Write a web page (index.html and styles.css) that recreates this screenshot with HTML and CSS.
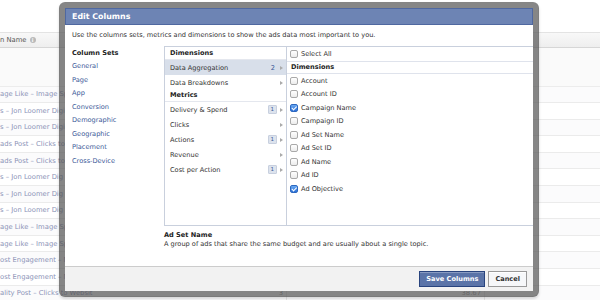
FILE: index.html
```html
<!DOCTYPE html>
<html lang="en">
<head>
    <meta charset="UTF-8">
    <title>Edit Columns</title>
    <link rel="stylesheet" href="styles.css">
</head>
<body>
    <div class="grid">
        <div class="grid-head">
            <span class="head-name">n Name <i class="info">i</i></span>
        </div>
        <div class="grid-summary"></div>
        <div class="grid-row"><span class="cell-name">age Like – Image Sp</span><span class="cell-num"></span><span class="cell-num"></span></div>
        <div class="grid-row"><span class="cell-name">s – Jon Loomer Digi</span><span class="cell-num"></span><span class="cell-num"></span></div>
        <div class="grid-row"><span class="cell-name">s – Jon Loomer Digi</span><span class="cell-num"></span><span class="cell-num"></span></div>
        <div class="grid-row"><span class="cell-name">ads Post – Clicks to</span><span class="cell-num"></span><span class="cell-num"></span></div>
        <div class="grid-row"><span class="cell-name">ads Post – Clicks to</span><span class="cell-num"></span><span class="cell-num"></span></div>
        <div class="grid-row"><span class="cell-name">s – Jon Loomer Dig</span><span class="cell-num"></span><span class="cell-num"></span></div>
        <div class="grid-row"><span class="cell-name">s – Jon Loomer Dig</span><span class="cell-num"></span><span class="cell-num"></span></div>
        <div class="grid-row"><span class="cell-name">s – Jon Loomer Dig</span><span class="cell-num"></span><span class="cell-num"></span></div>
        <div class="grid-row"><span class="cell-name">age Like – Image Sp</span><span class="cell-num"></span><span class="cell-num"></span></div>
        <div class="grid-row"><span class="cell-name">age Like – Image Sp</span><span class="cell-num"></span><span class="cell-num"></span></div>
        <div class="grid-row"><span class="cell-name">ost Engagement – N</span><span class="cell-num"></span><span class="cell-num"></span></div>
        <div class="grid-row"><span class="cell-name">ost Engagement – N</span><span class="cell-num"></span><span class="cell-num"></span></div>
        <div class="grid-row last"><span class="cell-name">ality Post – Clicks to Websit</span><span class="cell-num">3</span><span class="cell-num">38.67</span></div>
    </div>

    <div class="dialog">
        <div class="dialog-title">Edit Columns</div>
        <div class="dialog-body">
            <p class="intro">Use the columns sets, metrics and dimensions to show the ads data most important to you.</p>
            <div class="editor">
                <div class="sets">
                    <h4>Column Sets</h4>
                    <a href="#">General</a>
                    <a href="#">Page</a>
                    <a href="#">App</a>
                    <a href="#">Conversion</a>
                    <a href="#">Demographic</a>
                    <a href="#">Geographic</a>
                    <a href="#">Placement</a>
                    <a href="#">Cross-Device</a>
                </div>
                <div class="main">
                    <div class="picker">
                        <div class="groups">
                            <div class="group-head first">Dimensions</div>
                            <div class="group selected"><span class="label">Data Aggregation</span><span class="count">2</span><span class="arrow"></span></div>
                            <div class="group"><span class="label">Data Breakdowns</span><span class="arrow"></span></div>
                            <div class="group-head">Metrics</div>
                            <div class="group"><span class="label">Delivery &amp; Spend</span><span class="badge">1</span><span class="arrow"></span></div>
                            <div class="group"><span class="label">Clicks</span><span class="arrow"></span></div>
                            <div class="group"><span class="label">Actions</span><span class="badge">1</span><span class="arrow"></span></div>
                            <div class="group"><span class="label">Revenue</span><span class="arrow"></span></div>
                            <div class="group"><span class="label">Cost per Action</span><span class="badge">1</span><span class="arrow"></span></div>
                        </div>
                        <div class="fields">
                            <div class="field select-all"><span class="check"></span>Select All</div>
                            <div class="field-head">Dimensions</div>
                            <div class="field"><span class="check"></span>Account</div>
                            <div class="field"><span class="check"></span>Account ID</div>
                            <div class="field"><span class="check on"></span>Campaign Name</div>
                            <div class="field"><span class="check"></span>Campaign ID</div>
                            <div class="field"><span class="check"></span>Ad Set Name</div>
                            <div class="field"><span class="check"></span>Ad Set ID</div>
                            <div class="field"><span class="check"></span>Ad Name</div>
                            <div class="field"><span class="check"></span>Ad ID</div>
                            <div class="field"><span class="check on"></span>Ad Objective</div>
                        </div>
                    </div>
                    <div class="help">
                        <strong>Ad Set Name</strong>
                        <p>A group of ads that share the same budget and are usually about a single topic.</p>
                    </div>
                </div>
            </div>
        </div>
        <div class="dialog-footer">
            <button class="btn primary">Save Columns</button>
            <button class="btn">Cancel</button>
        </div>
    </div>
</body>
</html>
```

FILE: styles.css
```css
body {
    margin: 0;
    width: 600px;
    height: 300px;
    overflow: hidden;
    position: relative;
    font-family: "DejaVu Sans", "Liberation Sans", sans-serif;
    font-size: 6.6px;
    color: #333;
    background: #fff;
}

/* page behind the dialog */
.grid {
    padding-top: 32px;
}
.grid-head {
    height: 16px;
    box-sizing: border-box;
    border-top: 1px solid #e3e3e3;
    border-bottom: 1px solid #d6d6d6;
    background: linear-gradient(#f8f8f8, #eeeeee);
    display: flex;
    align-items: center;
    color: #555;
    white-space: nowrap;
    font-size: 6.8px;
}
.head-name {
    display: flex;
    align-items: center;
}
.info {
    display: inline-block;
    width: 6px;
    height: 6px;
    margin-left: 3px;
    border-radius: 50%;
    background: #b9b9b9;
    color: #fff;
    font-size: 5px;
    line-height: 6px;
    text-align: center;
    font-style: normal;
    font-weight: bold;
}
.grid-summary {
    height: 38.5px;
    box-sizing: border-box;
    background: #fafafa;
    border-bottom: 1px solid #ececec;
}
.grid-row {
    height: 16.6px;
    box-sizing: border-box;
    border-bottom: 1px solid #ebebeb;
    display: flex;
    color: #8c93b7;
    white-space: nowrap;
    font-size: 6.8px;
}
.grid-row:nth-child(odd) {
    background: #fbfbfc;
}
.cell-name {
    width: 287px;
    box-sizing: border-box;
    border-right: 1px solid #e6e6e6;
    display: flex;
    align-items: center;
}
.cell-num {
    display: flex;
    align-items: center;
    justify-content: flex-end;
    box-sizing: border-box;
    border-right: 1px solid #e6e6e6;
    padding-right: 3px;
    color: #999;
}
.cell-num:nth-child(2) { width: 0; padding-right: 0; border: 0; position: relative; left: -4px; }
.cell-num:nth-child(3) { width: 198px; }

/* dialog */
.dialog {
    position: absolute;
    left: 59px;
    top: 2px;
    width: 468px;
    height: 283px;
    border: 6px solid rgba(82, 82, 82, .7);
    border-radius: 6px;
    background: #fff;
    background-clip: padding-box;
    display: flex;
    flex-direction: column;
    box-shadow: 0 2px 3px rgba(0, 0, 0, .15);
}
.dialog-title {
    height: 17px;
    box-sizing: border-box;
    background: #6d84b4;
    border: 1px solid #4f68a0;
    color: #fff;
    font-weight: bold;
    font-size: 7.9px;
    line-height: 15px;
    padding-left: 6px;
}
.dialog-body {
    flex: 1;
    padding: 5px 0 0 7px;
    overflow: hidden;
}
.intro {
    margin: 0;
    line-height: 10px;
}
.editor {
    display: flex;
    margin-top: 6px;
}
.sets {
    width: 92px;
    margin-top: 0.5px;
    line-height: 13.5px;
}
.sets h4 {
    margin: 0;
    font-size: 6.6px;
    color: #222;
}
.sets a {
    display: block;
    color: #3b5998;
    text-decoration: none;
}
.main {
    flex: 1;
}
.picker {
    display: flex;
    height: 180px;
    box-sizing: border-box;
    border: 1px solid #c9d0dd;
    border-right: 0;
}
.groups {
    width: 122px;
    box-sizing: border-box;
    border-right: 1px solid #c9d0dd;
}
.group-head {
    height: 12px;
    box-sizing: border-box;
    padding-left: 5px;
    font-weight: bold;
    line-height: 11px;
    border-bottom: 1px solid #e4e7ee;
    color: #222;
}
.group-head.first {
    height: 13px;
    line-height: 12px;
}
.group {
    height: 15px;
    display: flex;
    align-items: center;
    padding: 0 3px 0 5px;
}
.group.selected {
    background: #d8dfea;
}
.label {
    flex: 1;
}
.count {
    color: #3b5998;
    margin-right: 5px;
}
.badge {
    background: #dde3ed;
    border: 1px solid #c8d0df;
    border-radius: 1px;
    color: #3b5998;
    font-size: 5.5px;
    line-height: 7px;
    padding: 0 2px;
    margin-right: 3px;
}
.arrow {
    width: 0;
    height: 0;
    border-left: 3px solid #aaa;
    border-top: 2px solid transparent;
    border-bottom: 2px solid transparent;
}
.fields {
    flex: 1;
}
.field {
    height: 13.5px;
    display: flex;
    align-items: center;
    padding-left: 3px;
}
.field.select-all {
    height: 15px;
    box-sizing: border-box;
    border-bottom: 1px solid #dfe3ec;
}
.field-head {
    height: 12px;
    box-sizing: border-box;
    border-bottom: 1px solid #dfe3ec;
    padding-left: 4px;
    font-weight: bold;
    line-height: 11px;
    color: #222;
}
.check {
    width: 8px;
    height: 8px;
    box-sizing: border-box;
    border: 1px solid #a9a9a9;
    border-radius: 2px;
    background: linear-gradient(#fff, #ececec);
    margin-right: 3px;
    position: relative;
}
.check.on {
    background: linear-gradient(#6aa9f2, #2c70d6);
    border-color: #2d68c0;
}
.check.on::after {
    content: "";
    position: absolute;
    left: 2px;
    top: 0;
    width: 1.5px;
    height: 3.5px;
    border-right: 1.2px solid #fff;
    border-bottom: 1.2px solid #fff;
    transform: rotate(45deg);
}
.help {
    margin-top: 5px;
    line-height: 9px;
}
.help strong {
    display: block;
    color: #222;
}
.help p {
    margin: 0;
}
.dialog-footer {
    height: 25px;
    box-sizing: border-box;
    border-top: 1px solid #ccc;
    background: #f2f2f2;
    display: flex;
    justify-content: flex-end;
    align-items: center;
    gap: 3px;
    padding-right: 6px;
}
.btn {
    height: 16px;
    padding: 0 6px;
    border: 1px solid #999;
    background: #f6f7f9;
    color: #333;
    font-family: inherit;
    font-size: 6.6px;
    font-weight: bold;
    box-shadow: inset 0 1px 0 #fff;
}
.btn.primary {
    background: #5b74a8;
    border-color: #29447e;
    color: #fff;
    box-shadow: inset 0 1px 0 #8a9cc2;
}
```
